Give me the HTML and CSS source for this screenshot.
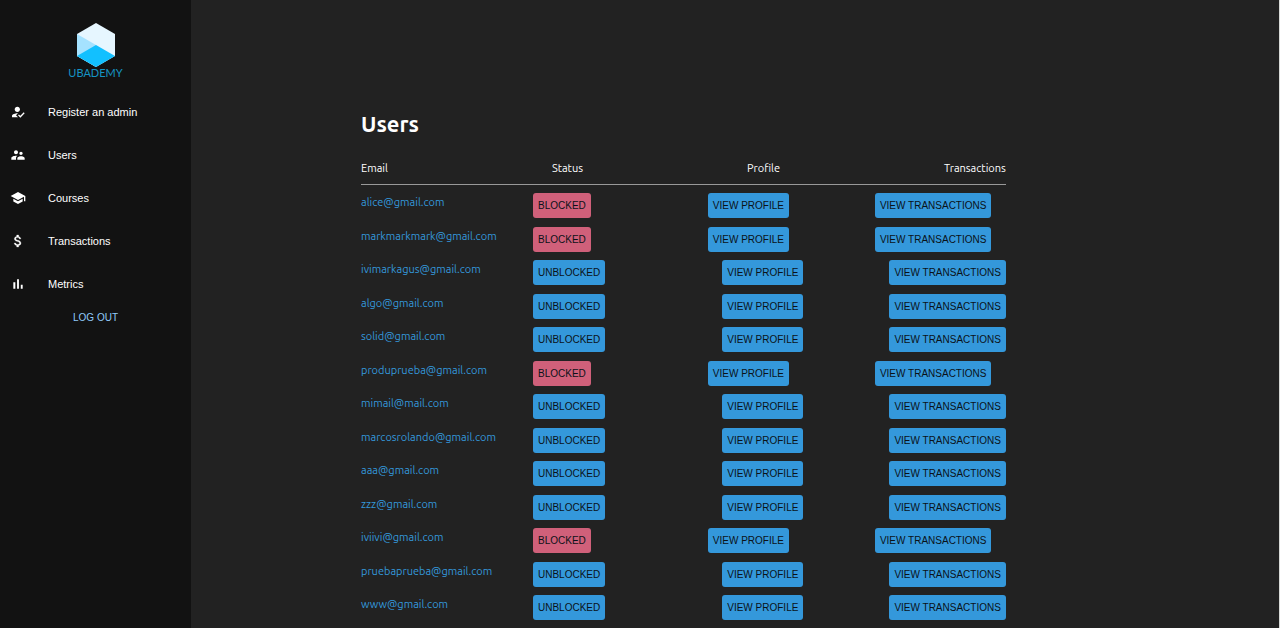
FILE: index.html
```html
<!DOCTYPE html>
<html lang="en">
<head>
<meta charset="utf-8">
<title>Ubademy – Users</title>
<link rel="stylesheet" href="styles.css">
</head>
<body>
<aside class="sidebar">
  <div class="logo">
    <svg class="logo-mark" viewBox="0 0 38 44" aria-hidden="true">
      <path fill="#e6f6ff" d="M19 0 38 11V33L19 44 0 33V11z"/>
      <path fill="#a5e2ff" d="M0 11 19 22 19 44 0 33z"/>
      <path fill="#12c0ff" d="M19 22 38 33 19 44 0 33z"/>
    </svg>
    <span class="logo-name">UBADEMY</span>
  </div>
  <nav class="menu">
    <a class="menu-item" href="#register"><svg class="icon" viewBox="0 0 24 24" aria-hidden="true"><path d="M9 17l3-2.94c-.39-.04-.68-.06-1-.06-2.67 0-8 1.34-8 4v2h9l-3-3zm2-5c2.21 0 4-1.79 4-4s-1.79-4-4-4-4 1.79-4 4 1.79 4 4 4M15.47 20.5L12 17l1.4-1.41 2.07 2.08 5.13-5.17 1.4 1.41z"/></svg>Register an admin</a>
    <a class="menu-item" href="#users"><svg class="icon" viewBox="0 0 24 24" aria-hidden="true"><path d="M16.5 12c1.38 0 2.49-1.12 2.49-2.5S17.88 7 16.5 7C15.12 7 14 8.12 14 9.5s1.12 2.5 2.5 2.5zM9 11c1.66 0 2.99-1.34 2.99-3S10.66 5 9 5C7.34 5 6 6.34 6 8s1.34 3 3 3zm7.5 3c-1.83 0-5.5.92-5.5 2.75V19h11v-2.25c0-1.83-3.67-2.75-5.5-2.75zM9 13c-2.33 0-7 1.17-7 3.5V19h7v-2.25c0-.85.33-2.34 2.37-3.47C10.5 13.1 9.66 13 9 13z"/></svg>Users</a>
    <a class="menu-item" href="#courses"><svg class="icon" viewBox="0 0 24 24" aria-hidden="true"><path d="M5 13.18v4L12 21l7-3.82v-4L12 17l-7-3.82zM12 3L1 9l11 6 9-4.91V17h2V9L12 3z"/></svg>Courses</a>
    <a class="menu-item" href="#transactions"><svg class="icon" viewBox="0 0 24 24" aria-hidden="true"><path stroke="#fff" stroke-width=".4" d="M11.8 10.9c-2.27-.59-3-1.2-3-2.15 0-1.09 1.01-1.85 2.7-1.85 1.78 0 2.44.85 2.5 2.1h2.21c-.07-1.72-1.12-3.3-3.21-3.81V3h-3v2.16c-1.94.42-3.5 1.68-3.5 3.61 0 2.31 1.91 3.46 4.7 4.13 2.5.6 3 1.48 3 2.41 0 .69-.49 1.79-2.7 1.79-2.06 0-2.87-.92-2.98-2.1h-2.2c.12 2.19 1.76 3.42 3.68 3.83V21h3v-2.15c1.95-.37 3.5-1.5 3.5-3.55 0-2.84-2.43-3.81-4.7-4.4z"/></svg>Transactions</a>
    <a class="menu-item" href="#metrics"><svg class="icon" viewBox="0 0 24 24" aria-hidden="true"><path d="M5 9.2h3V19H5zM10.6 5h2.8v14h-2.8zm5.6 8H19v6h-2.8z"/></svg>Metrics</a>
  </nav>
  <button class="logout" type="button">LOG OUT</button>
</aside>
<main class="content">
  <h1 class="title">Users</h1>
  <table class="users">
    <thead>
      <tr class="head-row"><th>Email</th><th>Status</th><th>Profile</th><th>Transactions</th></tr>
    </thead>
    <tbody id="rows"></tbody>
  </table>
</main>
<script src="app.js"></script>
</body>
</html>
```
FILE: styles.css
```css
* { box-sizing: border-box; }

body {
  margin: 0;
  display: flex;
  height: 100vh;
  overflow: hidden;
  background: #222;
  border-right: 1px solid #d8dad8;
  color: #fff;
  font-family: "Liberation Sans", Arial, sans-serif;
  font-size: 11px;
}

.sidebar {
  flex: 0 0 191px;
  display: flex;
  flex-direction: column;
  align-items: center;
  padding-top: 23px;
  background: #121212;
}

.logo {
  display: flex;
  flex-direction: column;
  align-items: center;
}

.logo-mark { width: 38px; height: 44px; }

.logo-name {
  color: #1594c4;
  font-family: Lato, sans-serif;
  line-height: 12px;
}

.menu {
  align-self: stretch;
  display: flex;
  flex-direction: column;
  margin-top: 11px;
}

.menu-item {
  display: flex;
  align-items: center;
  gap: 22px;
  height: 43px;
  padding-left: 10px;
  color: #fff;
  text-decoration: none;
}

.icon { width: 16px; height: 16px; fill: #fff; }

.logout {
  margin-top: 2px;
  padding: 4px 6px;
  border: 0;
  background: none;
  color: #90caf9;
  font: 10px/14px "Liberation Sans", Arial, sans-serif;
}

.content {
  flex: 1;
  padding: 108px 25% 0 170px;
  font-family: Ubuntu, "Open Sans", sans-serif;
}

.title {
  margin: 0;
  font-size: 22px;
  line-height: 32px;
}

.users { display: block; margin-top: 16px; }
.users thead, .users tbody { display: block; }
.users th, .users td { display: block; padding: 0; }

.head-row {
  display: flex;
  justify-content: space-between;
  height: 29px;
  border-bottom: 1px solid #999;
  line-height: 24px;
}

.head-row th { font-weight: 400; }

.user-row { display: flex; padding-top: 8px; }
.user-row:nth-child(even) { padding-top: 9px; }

.users .email { width: 172px; line-height: 18px; }
.users .status { margin-right: 117px; }
.users .profile { margin-right: 86px; }

.email a { color: #3498db; text-decoration: none; }

.btn {
  display: block;
  height: 25px;
  padding: 0 5px;
  border: 0;
  border-radius: 3px;
  background: #3498db;
  color: #0b1218;
  font: 10px/25px "Liberation Sans", Arial, sans-serif;
  white-space: nowrap;
}

.btn-blocked { background: #d0607a; }
```
FILE: app.js
```js
const users = [
  ["alice@gmail.com", true],
  ["markmarkmark@gmail.com", true],
  ["ivimarkagus@gmail.com", false],
  ["algo@gmail.com", false],
  ["solid@gmail.com", false],
  ["produprueba@gmail.com", true],
  ["mimail@mail.com", false],
  ["marcosrolando@gmail.com", false],
  ["aaa@gmail.com", false],
  ["zzz@gmail.com", false],
  ["iviivi@gmail.com", true],
  ["pruebaprueba@gmail.com", false],
  ["www@gmail.com", false],
];

document.getElementById("rows").innerHTML = users.map(([email, blocked]) => `
  <tr class="user-row">
    <td class="email"><a href="#user">${email}</a></td>
    <td class="status"><button type="button" class="btn ${blocked ? "btn-blocked" : ""}">${blocked ? "BLOCKED" : "UNBLOCKED"}</button></td>
    <td class="profile"><button type="button" class="btn">VIEW PROFILE</button></td>
    <td><button type="button" class="btn">VIEW TRANSACTIONS</button></td>
  </tr>`).join("");
```
